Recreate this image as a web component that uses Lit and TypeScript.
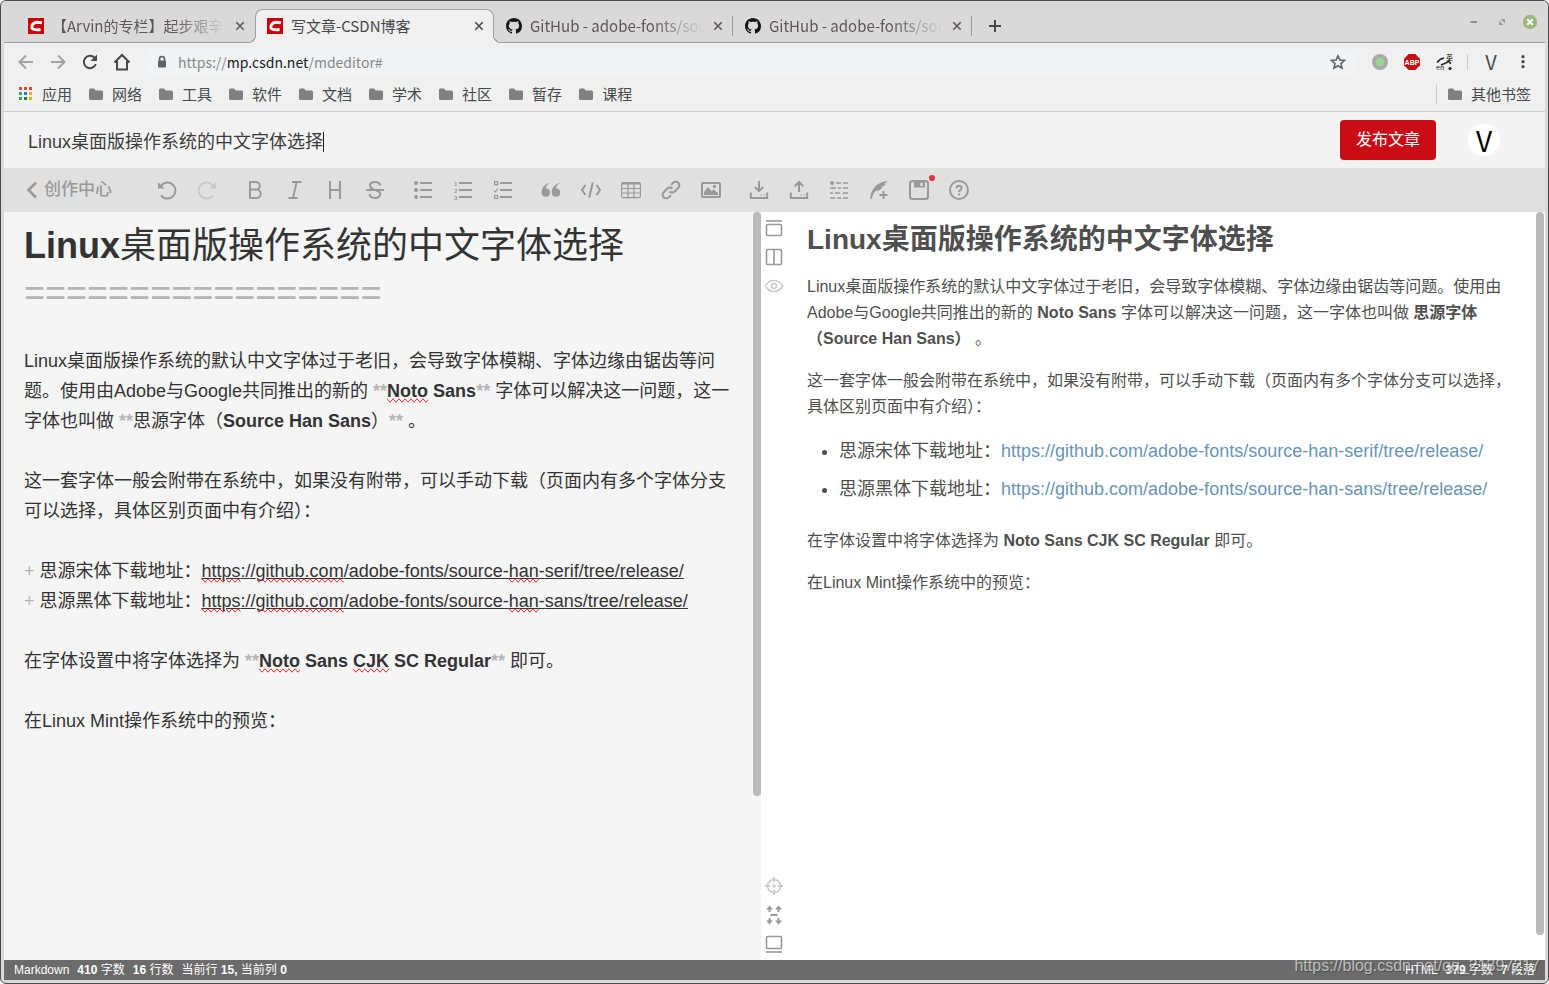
import { LitElement, html, svg, css, nothing, type TemplateResult, type SVGTemplateResult } from "lit";
import { customElement, property } from "lit/decorators.js";
import { classMap } from "lit/directives/class-map.js";

const ICONS: Record<string, SVGTemplateResult> = {
  undo: svg`<path class="f" d="M1 2v6.5h6.500z"/><path d="M4 15.300A8 8 0 1 0 4.200 5.600"/>`,
  redo: svg`<path class="f" d="M19 2v6.500h-6.500z"/><path d="M16 15.300A8 8 0 1 1 15.800 5.600"/>`,
  bold: svg`<path d="M5 2h6a3.800 3.800 0 0 1 0 7.600H5zM5 9.600h6.500a4.200 4.200 0 0 1 0 8.400H5z"/>`,
  italic: svg`<path d="M7 2h9.500M3.500 18h9M11.700 2L8 18"/>`,
  heading: svg`<path d="M5 1v18M15 1v18M5 10h10"/>`,
  strike: svg`<path d="M1 10h18M15 5.500C15 .8 5 .8 5 5.500c0 2 1.500 3.300 4 4.300M11.500 10.500c2.400.8 3.800 2 3.800 3.800 0 4.900-10.600 4.900-10.600-.3"/>`,
  ul: svg`<circle class="f" cx="3" cy="3" r="2"/><circle class="f" cx="3" cy="10" r="2"/><circle class="f" cx="3" cy="17" r="2"/><path d="M7 3h12M7 10h12M7 17h12"/>`,
  ol: svg`<text class="num" x="1" y="5.500">1</text><text class="num" x="1" y="12.500">2</text><text class="num" x="1" y="19.500">3</text><path d="M6 3h13M6 10h13M6 17h13"/>`,
  check: svg`<path class="thin" d="M1.600 1.600h3v3h-3zM1.600 15.500h3v3h-3zM1 10.300l1.400 1.500L5 8.500"/><path d="M7 3h12M7 10h12M7 17h12"/>`,
  quote: svg`<path class="f" d="M9 2.800C3.400 4 .6 8 .6 12.700a4.200 4.200 0 1 0 4.400-4.300c-.3-2.200 1.200-3.800 4-5.600zM19.200 2.800C13.600 4 10.800 8 10.800 12.700a4.200 4.200 0 1 0 4.400-4.300c-.3-2.200 1.200-3.800 4-5.600z"/>`,
  code: svg`<path d="M4.500 5L1 10l3.500 5M15.500 5L19 10l-3.500 5M11.800 2.500L8.200 17.500"/>`,
  table: svg`<rect class="thin" x=".6" y="2.600" width="18.800" height="15" rx="1.500"/><path d="M1 3.500h18"/><path class="thin" d="M1 8.500h18M1 13h18M7 4v13M13 4v13"/>`,
  link: svg`<path d="M8.500 11.500a3.600 3.600 0 0 0 5.200 0l3.600-3.700a3.600 3.600 0 0 0-5.100-5.100L10 4.900M11.500 8.500a3.600 3.600 0 0 0-5.200 0l-3.600 3.700a3.600 3.600 0 0 0 5.100 5.100L10 15.100"/>`,
  image: svg`<rect x="1" y="3" width="18" height="14" rx="1"/><path class="f" d="M3 15v-3l4-5 3.500 4 2-1.500L17 13v2z"/><circle class="f" cx="13.500" cy="6.500" r="1.700"/>`,
  download: svg`<path d="M1.800 12.500V18h16.400v-5.500M10 1v10M5.800 7l4.200 4.200L14.200 7"/><path class="thin" d="M11.500 15h1.500M14.500 15H16"/>`,
  upload: svg`<path d="M1.800 12.500V18h16.400v-5.500M10 12V2M5.800 6.200L10 2l4.200 4.200"/><path class="thin" d="M11.500 15h1.500M14.500 15H16"/>`,
  outline: svg`<circle class="f" cx="3" cy="3" r="2"/><path class="mid" d="M7 3h5M14 3h5M1 8h6M9 8h3M14 8h5M1 13h3M6 13h5M14 13h5M1 18h5M8 18h4M14 18h5"/>`,
  feather: svg`<path class="f" d="M1 19C2 10.500 6 2.500 18.500 1c-.8 1.500-2 2.300-3.500 2.800l1.500.3c-1 1.700-2.500 2.500-4.500 3l1.500.4C12 9.800 9.500 10.800 6.500 11 4.500 13 3.500 16 2.500 19z"/><path d="M14.500 11v8M10.500 15h8"/>`,
  save: svg`<rect x="1" y="1" width="18" height="18" rx="2.500"/><path class="f" d="M5 1h11v6.500H5z"/><path class="cut" d="M12.500 3v3"/>`,
  help: svg`<circle cx="10" cy="10" r="9"/><path d="M7.500 8.200c0-3.400 5.200-3.300 5.200-.3 0 2-2.600 2-2.600 4.100M10.100 13.500v1.900"/>`,
  viewFull: svg`<path class="mid" d="M2 3h16"/><rect class="mid" x="2.500" y="6.500" width="15" height="11" rx="1"/>`,
  viewSplit: svg`<rect class="mid" x="2.500" y="2.500" width="15" height="15" rx="1"/><path class="mid" d="M10 3v14"/>`,
  eye: svg`<path class="mid" d="M1.500 10c4-7.300 13-7.300 17 0-4 7.300-13 7.300-17 0z"/><circle class="mid" cx="10" cy="10" r="2.500"/>`,
  target: svg`<circle class="mid" cx="10" cy="10" r="6.500"/><circle class="f" cx="10" cy="10" r="1.800"/><path d="M10 1v5M10 14v5M1 10h5M14 10h5"/>`,
  sync: svg`<path class="f" d="M5.500 .5L9 4.500H2zM14.500 .5L18 4.500h-7zM5.500 19.500L9 15.500H2zM14.500 19.500l3.500-4h-7z"/><path d="M5.500 3v4M14.500 3v4M5.500 13v4M14.500 13v4M6.500 10h7"/>`,
  viewLaptop: svg`<rect class="mid" x="2.500" y="2.500" width="15" height="12" rx="1"/><path class="mid" d="M2 18h16"/>`,
  chevron: svg`<path class="bold" d="M14 2.500L6.500 10l7.500 7.500"/>`,
  back: svg`<path d="M17 10H4M10 3.500L3.500 10l6.500 6.500"/>`,
  forward: svg`<path d="M3 10h13M10 3.500l6.500 6.500-6.500 6.500"/>`,
  reload: svg`<path d="M15.800 12.200A6.200 6.200 0 1 1 14.600 5.800"/><path class="f" d="M17 2.500v6.500h-6.500z"/>`,
  home: svg`<path d="M2.500 10.500L10 3l7.500 7.500M5 9v8.500h10V9"/>`,
  lock: svg`<rect class="f" x="6" y="8.500" width="8" height="7" rx="1"/><path class="mid" d="M7.500 9V7a2.500 2.500 0 0 1 5 0v2"/>`,
  star: svg`<path class="mid" d="M10 3.800l1.900 4.300 4.600.4-3.500 3.100 1 4.600-4-2.400-4 2.400 1-4.600-3.500-3.100 4.600-.4z"/>`,
  close: svg`<path class="mid" d="M6.300 6.300l7.400 7.400M13.700 6.300l-7.400 7.400"/>`,
  plus: svg`<path d="M10 4v12M4 10h12"/>`,
  dots: svg`<circle class="f" cx="10" cy="4.700" r="1.600"/><circle class="f" cx="10" cy="9.700" r="1.600"/><circle class="f" cx="10" cy="14.700" r="1.600"/>`,
  folder: svg`<path class="f" d="M3 6a1.500 1.500 0 0 1 1.500-1.500H8l1.800 2h5.700A1.500 1.500 0 0 1 17 8v6.500a1.500 1.500 0 0 1-1.500 1.500h-11A1.500 1.500 0 0 1 3 14.500z"/>`,
  apps: svg`<g stroke="none"><path fill="#ea4335" d="M3 3h3v3H3zM8 3h3v3H8zM13 3h3v3h-3z"/><path fill="#34a853" d="M3 8h3v3H3zM3 13h3v3H3z"/><path fill="#1a73e8" d="M8 8h3v3H8z"/><path fill="#f9ab00" d="M13 8h3v3h-3zM13 13h3v3h-3z"/><path fill="#188038" d="M8 13h3v3H8z"/></g>`,
  csdn: svg`<path fill="#c00" stroke="none" d="M2 2h16v16H2z"/><path stroke="#fff" stroke-width="2.800" d="M16 6.900C10.500 5.500 7 6.700 6 9.800c-1 3.500 2.400 4.600 8.600 3.700"/>`,
  github: svg`<path transform="translate(2 2)" fill="#161616" stroke="none" d="M8 0C3.580 0 0 3.580 0 8c0 3.540 2.290 6.530 5.470 7.590.4.070.55-.17.55-.38 0-.19-.01-.82-.01-1.490-2.010.37-2.530-.49-2.690-.94-.09-.23-.48-.94-.82-1.130-.28-.15-.68-.52-.01-.53.63-.01 1.080.58 1.230.82.72 1.210 1.870.87 2.330.66.07-.52.28-.87.51-1.070-1.780-.2-3.640-.89-3.640-3.950 0-.87.31-1.590.82-2.150-.08-.2-.36-1.020.08-2.120 0 0 .67-.21 2.200.82.64-.18 1.320-.27 2-.27s1.360.09 2 .27c1.530-1.040 2.200-.82 2.200-.82.44 1.100.16 1.920.08 2.120.51.56.82 1.270.82 2.150 0 3.070-1.870 3.750-3.650 3.950.29.25.54.73.54 1.480 0 1.070-.01 1.930-.01 2.200 0 .21.15.46.55.38A8.010 8.010 0 0 0 16 8c0-4.420-3.580-8-8-8z"/>`,
  green: svg`<circle cx="10" cy="10" r="6" stroke="#aaa" stroke-width="4" fill="#8fdc8f"/>`,
  abp: svg`<path fill="#c70d0d" stroke="none" d="M6.700 2h6.600L18 6.700v6.600L13.300 18H6.700L2 13.300V6.700z"/><text class="abp" x="10" y="12.800" text-anchor="middle">ABP</text>`,
  translate: svg`<path stroke="#222" stroke-width="1.600" d="M3 10.500c2-2.500 4-4 7-4.500M7 13c3-1 6-1.500 9-5M15 10l2 1.500"/><circle cx="16" cy="16.500" r="1.600" fill="#222" stroke="none"/><text class="tr" x="2" y="18">en</text><text class="tr" x="12" y="8">英</text>`,
  minimise: svg`<path stroke="#8a8d93" d="M6.500 10h6.500"/>`,
  restore: svg`<path fill="#9a9ca2" stroke="none" d="M13 7v4.500L8.500 7zM7 13V8.500L11.500 13z"/>`,
  quit: svg`<circle cx="10" cy="10" r="7.200" fill="#9ab87c" stroke="none"/><path stroke="#fff" d="M7.300 7.300l5.400 5.400M12.700 7.300l-5.400 5.400"/>`,
};

@customElement("ui-icon")
class UiIcon extends LitElement {
  @property() name = "";

  static styles = css`
    :host { display: block; flex: none; width: 20px; height: 20px; }
    svg { display: block; width: 20px; height: 20px; overflow: visible; fill: none; stroke: currentColor; stroke-width: 2; }
    .f { fill: currentColor; stroke: none; }
    .thin { stroke-width: 1.2; }
    .mid { stroke-width: 1.6; }
    .bold { stroke-width: 2.6; }
    .cut { stroke: #e0e0e0; stroke-width: 2.4; }
    text { font: bold 7px "Liberation Sans", sans-serif; fill: currentColor; stroke: none; }
    .num { font-size: 6px; }
    .abp { font-size: 7px; fill: #fff; }
    .tr { font: 7px "Noto Sans CJK SC", sans-serif; fill: #222; }
  `;

  render() {
    return html`<svg viewBox="0 0 20 20" aria-hidden="true">${ICONS[this.name] ?? nothing}</svg>`;
  }
}

const TABS = [
  { icon: "csdn", title: "【Arvin的专栏】起步艰辛无人知", active: false },
  { icon: "csdn", title: "写文章-CSDN博客", active: true },
  { icon: "github", title: "GitHub - adobe-fonts/source-han-serif", active: false },
  { icon: "github", title: "GitHub - adobe-fonts/source-han-sans", active: false },
];

const BOOKMARKS = ["网络", "工具", "软件", "文档", "学术", "社区", "暂存", "课程"];

@customElement("browser-chrome")
class BrowserChrome extends LitElement {
  static styles = css`
    :host { display: block; font: 15px/20px "Noto Sans CJK SC", sans-serif; color: #46494c; }
    button { all: unset; display: flex; align-items: center; justify-content: center; cursor: pointer; }
    a { color: inherit; text-decoration: none; }
    .strip { display: flex; align-items: flex-end; height: 41px; padding-left: 12px; background: #d9d9d9; border-bottom: 1px solid #a0a0a0; }
    .tab { display: flex; align-items: center; flex: 0 1 239px; box-sizing: border-box; min-width: 0; height: 34px; padding: 2px 5px 0 10px; position: relative; color: #5f5757; }
    .tab .title { flex: 1; min-width: 0; margin: 0 4px 0 6px; overflow: hidden; white-space: nowrap; mask-image: linear-gradient(90deg, #000 calc(100% - 52px), transparent); }
    .tab.divided::after { content: ""; position: absolute; right: 0; top: 8px; width: 1px; height: 20px; background: #999; }
    .tab.active { margin-bottom: -1px; background: #f0f0f0; border: 1px solid #a0a0a0; border-bottom: 0; border-radius: 8px 8px 0 0; padding: 0 4px 1px 9px; color: #46494c; }
    .tab.active .title { mask-image: none; }
    .tab.active::before, .tab.active::after { content: ""; position: absolute; bottom: 0; width: 8px; height: 8px; }
    .tab.active::before { left: -8px; background: radial-gradient(circle at 0 0, #d9d9d9 7px, #a0a0a0 7px 8px, #f0f0f0 8px); }
    .tab.active::after { right: -8px; background: radial-gradient(circle at 100% 0, #d9d9d9 7px, #a0a0a0 7px 8px, #f0f0f0 8px); }
    .new { margin: 0 0 6px 13px; }
    .window { display: flex; gap: 8px; margin: 0 5px 10px auto; }
    .nav { display: flex; align-items: center; height: 38px; background: #f0f0f0; padding: 0 12px; }
    .nav .move { display: flex; gap: 12px; }
    .nav .off { color: #a2a2a2; }
    .omnibox { display: flex; align-items: center; flex: 1; height: 28px; margin-left: 13px; padding: 0 7px; background: #f1f3f4; border-radius: 14px; color: #5f6368; }
    .url { flex: 1; margin-left: 6px; outline: 0; color: #85898c; font-size: 14px; white-space: nowrap; }
    .url b { font-weight: 400; color: #202124; }
    .ext { display: flex; align-items: center; gap: 12px; margin-left: 15px; }
    .ext i { width: 1px; height: 16px; margin: 0 1px; background: #ccc; }
    .user { width: 20px; font-size: 20px; }
    .marks { display: flex; align-items: center; gap: 14px; box-sizing: border-box; height: 31px; padding: 0 14px 4px 12px; background: #f0f0f0; border-bottom: 1px solid #ccc; }
    .marks a { display: flex; align-items: center; gap: 6px; white-space: nowrap; color: #46494c; }
    .marks ui-icon { color: #808080; }
    .marks .other { margin-left: auto; padding-left: 8px; border-left: 1px solid #ccc; }
  `;

  private iconButton(name: string, label: string, cls = "") {
    return html`<button class=${cls} aria-label=${label}><ui-icon name=${name}></ui-icon></button>`;
  }

  render() {
    return html`
      <div class="strip" role="tablist">
        ${TABS.map((t, i) => html`
          <div class=${classMap({ tab: true, active: t.active, divided: i > 1 })} role="tab" aria-selected=${t.active}>
            <ui-icon name=${t.icon}></ui-icon>
            <span class="title">${t.title}</span>
            ${this.iconButton("close", "关闭标签页")}
          </div>`)}
        ${this.iconButton("plus", "新标签页", "new")}
        <div class="window">
          ${this.iconButton("minimise", "最小化")}${this.iconButton("restore", "还原")}${this.iconButton("quit", "关闭")}
        </div>
      </div>
      <nav class="nav">
        <div class="move">
          ${this.iconButton("back", "后退", "off")}${this.iconButton("forward", "前进", "off")}
          ${this.iconButton("reload", "重新加载")}${this.iconButton("home", "主页")}
        </div>
        <div class="omnibox">
          <ui-icon name="lock"></ui-icon>
          <div class="url" role="textbox" aria-label="网址" contenteditable="true">https://<b>mp.csdn.net</b>/mdeditor#</div>
          ${this.iconButton("star", "添加书签")}
        </div>
        <div class="ext">
          ${this.iconButton("green", "扩展程序")}${this.iconButton("abp", "广告拦截")}${this.iconButton("translate", "翻译")}
          <i></i>
          <button class="user">V</button>
          ${this.iconButton("dots", "菜单")}
        </div>
      </nav>
      <nav class="marks">
        <a href="#"><ui-icon name="apps"></ui-icon>应用</a>
        ${BOOKMARKS.map((b) => html`<a href="#"><ui-icon name="folder"></ui-icon>${b}</a>`)}
        <a class="other" href="#"><ui-icon name="folder"></ui-icon>其他书签</a>
      </nav>`;
  }
}

const TOOL_GROUPS: [string, string][][] = [
  [["undo", "撤销"], ["redo", "重做"]],
  [["bold", "粗体"], ["italic", "斜体"], ["heading", "标题"], ["strike", "删除线"]],
  [["ul", "无序列表"], ["ol", "有序列表"], ["check", "任务列表"]],
  [["quote", "引用"], ["code", "代码"], ["table", "表格"], ["link", "链接"], ["image", "图片"]],
  [["download", "导出"], ["upload", "导入"], ["outline", "目录"], ["feather", "模板"], ["save", "保存"], ["help", "帮助"]],
];

const SOURCES = [
  { label: "思源宋体下载地址：", kind: "serif" },
  { label: "思源黑体下载地址：", kind: "sans" },
];

@customElement("app-root")
class AppRoot extends LitElement {
  static styles = css`
    :host { display: flex; flex-direction: column; box-sizing: border-box; min-height: 100vh; padding: 0 3px 3px; border: 1px solid #4c4a4c; border-radius: 6px; background: #d9d9d9; font-family: "Liberation Sans", "Noto Sans CJK SC", sans-serif; }
    button { all: unset; box-sizing: border-box; cursor: pointer; }
    .head { display: flex; align-items: center; height: 56px; padding: 0 45px 0 24px; background: #f3f3f3; }
    .title { display: flex; flex: 1; align-items: center; padding-top: 4px; }
    .title input { field-sizing: content; padding: 0; border: 0; outline: 0; background: none; font: 18px/24px "Liberation Sans", "Noto Sans CJK SC", sans-serif; color: #3c3c3c; }
    .caret { width: 1px; height: 20px; background: #222; }
    .publish { padding: 8px 16px; border-radius: 4px; background: #ca0c16; color: #fff; font-size: 16px; line-height: 24px; }
    .avatar { width: 32px; height: 32px; margin-left: 32px; border-radius: 50%; background: #fff; color: #000; text-align: center; font: 28px/32px "Noto Sans CJK SC", sans-serif; }
    .tools { display: flex; align-items: center; height: 44px; padding-left: 18px; background: #e0e0e0; color: #999; }
    .home { display: flex; align-items: center; width: 125px; color: #999; font-size: 17px; line-height: 20px; font-weight: 500; text-decoration: none; }
    .home span { margin-left: 2px; }
    .group { display: flex; margin-right: 8px; }
    .tool { width: 40px; height: 36px; padding: 8px 10px; position: relative; }
    .tool.off { color: #c8c8c8; }
    .tool.dot::after { content: ""; position: absolute; right: 4px; top: 3px; width: 6px; height: 6px; border-radius: 50%; background: #e8303a; }
    .work { display: flex; flex: 1; background: #fff; }
    .pane { flex: 1 1 0; min-width: 0; display: flex; }
    .pane.source { background: #f5f5f5; }
    .bar { flex: none; width: 8px; border-radius: 4px; background: #bababa; }
    .source .bar { height: 584px; }
    .preview .bar { height: 723px; margin-right: 1px; }
    .editor { flex: 1; min-width: 0; padding: 10px 20px; outline: 0; color: #333; font-size: 18px; line-height: 30px; }
    .editor p { margin: 0 0 30px; }
    .editor h1 { margin: 0 0 30px; font-size: 36px; line-height: 47px; }
    .editor h1 span { font-weight: 400; }
    .editor strong .plain { font-weight: 400; }
    .mark { color: #b5b5b5; font-weight: 400; }
    .mark.stars { font-weight: 700; }
    .bad { text-decoration-line: spelling-error; }
    .link { text-decoration: underline; }
    .side { display: flex; flex-direction: column; justify-content: space-between; width: 27px; padding: 6px 0; box-sizing: border-box; color: #999; }
    .side div { display: flex; flex-direction: column; gap: 9px; }
    .side button { margin-left: 3px; height: 20px; }
    .side .off { color: #ccc; }
    .view { flex: 1; min-width: 0; padding: 0 19px; color: #4f4f4f; font-size: 16px; line-height: 26px; }
    .view h1 { margin: 8px 0 14px; font-size: 28px; line-height: 40px; }
    .view p { margin: 0 0 16px; }
    .view ul { margin: 0 0 24px; padding-left: 32px; font-size: 18px; }
    .view li { margin-bottom: 8px; line-height: 30px; }
    .view a { color: #6795b5; text-decoration: none; }
    .status { display: flex; justify-content: space-between; height: 20px; padding: 0 10px; background: #6b6b6b; color: #fff; font-size: 12px; line-height: 20px; position: relative; }
    .status div { display: flex; gap: 8px; }
    .watermark { position: absolute; right: 5px; bottom: 4px; font-size: 16px; line-height: 20px; color: rgba(255, 255, 255, 0.6); text-shadow: 1px 1px 1px rgba(0, 0, 0, 0.3); }
  `;

  private sideButton(name: string, label: string, off = false): TemplateResult {
    return html`<button class=${classMap({ off })} aria-label=${label}><ui-icon name=${name}></ui-icon></button>`;
  }

  private stars() {
    return html`<span class="mark stars">**</span>`;
  }

  render() {
    return html`
      <browser-chrome></browser-chrome>
      <header class="head">
        <div class="title">
          <input aria-label="文章标题" .value=${"Linux桌面版操作系统的中文字体选择"} /><span class="caret"></span>
        </div>
        <button class="publish">发布文章</button>
        <div class="avatar">V</div>
      </header>
      <div class="tools" role="toolbar">
        <a class="home" href="#"><ui-icon name="chevron"></ui-icon><span>创作中心</span></a>
        ${TOOL_GROUPS.map((g) => html`<div class="group">${g.map(([name, label]) => html`
          <button class=${classMap({ tool: true, off: name === "redo", dot: name === "save" })} aria-label=${label}><ui-icon name=${name}></ui-icon></button>`)}</div>`)}
      </div>
      <main class="work">
        <section class="pane source">
          <div class="editor" contenteditable="true" spellcheck="false" role="textbox" aria-multiline="true" aria-label="Markdown">
            <h1>Linux<span>桌面版操作系统的中文字体选择</span><br /><span class="mark">=================</span></h1>
            <p>Linux桌面版操作系统的默认中文字体过于老旧，会导致字体模糊、字体边缘由锯齿等问题。使用由Adobe与Google共同推出的新的 ${this.stars()}<strong><span class="bad">Noto</span> Sans</strong>${this.stars()} 字体可以解决这一问题，这一字体也叫做 ${this.stars()}<strong><span class="plain">思源字体（</span>Source Han Sans<span class="plain">）</span></strong>${this.stars()} 。</p>
            <p>这一套字体一般会附带在系统中，如果没有附带，可以手动下载（页面内有多个字体分支可以选择，具体区别页面中有介绍）：</p>
            <p>${SOURCES.map((s, i) => html`${i ? html`<br />` : nothing}<span class="mark">+</span> ${s.label}<span class="link"><span class="bad">https</span>://<span class="bad">github.com</span>/adobe-fonts/source-<span class="bad">han</span>-${s.kind}/tree/release/</span>`)}</p>
            <p>在字体设置中将字体选择为 ${this.stars()}<strong><span class="bad">Noto</span> Sans <span class="bad">CJK</span> SC Regular</strong>${this.stars()} 即可。</p>
            <p>在Linux Mint操作系统中的预览：</p>
          </div>
          <div class="bar"></div>
        </section>
        <aside class="side">
          <div>${this.sideButton("viewFull", "导航栏")}${this.sideButton("viewSplit", "分栏")}${this.sideButton("eye", "预览", true)}</div>
          <div>${this.sideButton("target", "聚焦", true)}${this.sideButton("sync", "同步滚动")}${this.sideButton("viewLaptop", "状态栏")}</div>
        </aside>
        <section class="pane preview">
          <article class="view">
            <h1>Linux桌面版操作系统的中文字体选择</h1>
            <p>Linux桌面版操作系统的默认中文字体过于老旧，会导致字体模糊、字体边缘由锯齿等问题。使用由Adobe与Google共同推出的新的 <strong>Noto Sans</strong> 字体可以解决这一问题，这一字体也叫做 <strong>思源字体（Source Han Sans）</strong> 。</p>
            <p>这一套字体一般会附带在系统中，如果没有附带，可以手动下载（页面内有多个字体分支可以选择，具体区别页面中有介绍）：</p>
            <ul>
              ${SOURCES.map((s) => html`<li>${s.label}<a href="#">https://github.com/adobe-fonts/source-han-${s.kind}/tree/release/</a></li>`)}
            </ul>
            <p>在字体设置中将字体选择为 <strong>Noto Sans CJK SC Regular</strong> 即可。</p>
            <p>在Linux Mint操作系统中的预览：</p>
          </article>
          <div class="bar"></div>
        </section>
      </main>
      <footer class="status">
        <div><span>Markdown</span><span><b>410</b> 字数</span><span><b>16</b> 行数</span><span>当前行 <b>15,</b> 当前列 <b>0</b></span></div>
        <div><span>HTML</span><span><b>379</b> 字数</span><span><b>7</b> 段落</span></div>
        <span class="watermark">https://blog.csdn.net/qq_21397217</span>
      </footer>`;
  }
}
